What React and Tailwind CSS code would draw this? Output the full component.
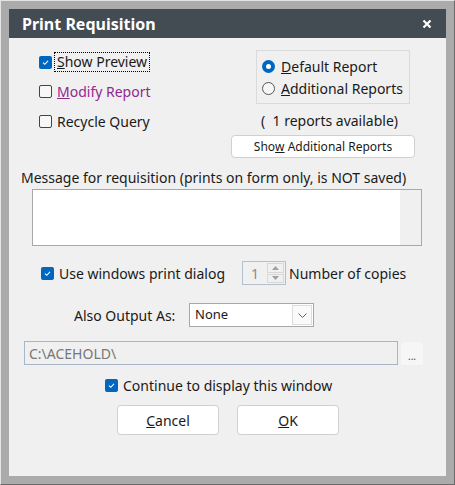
import React from 'react';

const font = { fontFamily: '"Noto Sans", "Segoe UI", sans-serif' };

const Check = ({ checked }) =>
  checked ? (
    <span className="flex w-[13px] h-[13px] shrink-0 items-center justify-center rounded-[2px] bg-[#0067c0]">
      <svg width="9" height="9" viewBox="0 0 9 9">
        <path d="M2 4.6 L3.8 6.3 L7 2.8" fill="none" stroke="white" strokeWidth="1.1" />
      </svg>
    </span>
  ) : (
    <span className="block w-[13px] h-[13px] shrink-0 rounded-[2px] border border-[#444] bg-[#f7f7f7]" />
  );

const Radio = ({ checked }) =>
  checked ? (
    <span className="flex w-[13px] h-[13px] shrink-0 items-center justify-center rounded-full bg-[#0067c0]">
      <span className="block w-[5px] h-[5px] rounded-full bg-white" />
    </span>
  ) : (
    <span className="block w-[13px] h-[13px] shrink-0 rounded-full border border-[#555] bg-[#f7f7f7]" />
  );

const Btn = ({ children, className = '' }) => (
  <div className={`flex items-center justify-center rounded-[4px] border border-[#d0d0d0] bg-white text-[#1a1a1a] ${className}`}>
    {children}
  </div>
);

export default function App() {
  return (
    <div
      className="w-[455px] h-[485px] bg-[#ababab] border-t border-l border-t-[#e4e4e4] border-l-[#e4e4e4] border-r border-b border-r-[#6a6a6a] border-b-[#6a6a6a] p-[8px] text-[#1a1a1a]"
      style={font}
    >
      <div className="flex h-full w-full flex-col">
        {/* Title bar */}
        <div className="flex h-[29px] shrink-0 items-center justify-between bg-[#434b53] pl-[13px] pr-[14px]">
          <span className="text-[16px] font-bold text-white leading-none">Print Requisition</span>
          <svg width="10" height="10" viewBox="0 0 10 10">
            <path d="M1.5 1.5 L8.5 8.5 M8.5 1.5 L1.5 8.5" stroke="white" strokeWidth="2.2" />
          </svg>
        </div>

        {/* Body */}
        <div className="flex flex-1 flex-col bg-[#f0f0f0] pt-[12px] text-[14px]">
          <div className="flex">
            {/* Left options */}
            <div className="ml-[30px] mt-[2px] flex flex-col">
              <div className="flex h-[20px] items-center">
                <Check checked />
                <span className="ml-[2px] border border-dotted border-black px-[2px] leading-[18px]">
                  <u>S</u>how Preview
                </span>
              </div>
              <div className="mt-[9px] flex h-[20px] items-center">
                <Check />
                <span className="ml-[5px] text-[#94278f]">
                  <u>M</u>odify Report
                </span>
              </div>
              <div className="mt-[10px] flex h-[20px] items-center">
                <Check />
                <span className="ml-[5px]">Recycle Query</span>
              </div>
            </div>

            {/* Right report group */}
            <div className="ml-auto mr-[31px] flex w-[184px] flex-col">
              <div className="ml-[25px] flex h-[54px] w-[154px] flex-col justify-center border border-[#dadada] pl-[5px]">
                <div className="flex h-[22px] items-center">
                  <Radio checked />
                  <span className="ml-[6px]">
                    <u>D</u>efault Report
                  </span>
                </div>
                <div className="flex h-[22px] items-center">
                  <Radio />
                  <span className="ml-[6px]">
                    <u>A</u>dditional Reports
                  </span>
                </div>
              </div>
              <div className="mt-[7px] h-[20px] pl-[30px] leading-[20px]">(&nbsp; 1 reports available)</div>
              <Btn className="mt-[4px] h-[23px] w-[184px] text-[12px]">
                Sho<u>w</u>&nbsp;Additional Reports
              </Btn>
            </div>
          </div>

          {/* Message */}
          <div className="ml-[12px] mt-[10px] h-[20px] leading-[20px]">
            Message for requisition (prints on form only, is NOT saved)
          </div>
          <div className="ml-[23px] mt-[1px] flex h-[57px] w-[390px] border border-[#a8a8a8] bg-white">
            <div className="flex-1" />
            <div className="w-[21px] bg-[#f0f0f0]" />
          </div>

          {/* Print dialog + copies */}
          <div className="mt-[15px] flex h-[24px] items-center">
            <div className="ml-[32px]">
              <Check checked />
            </div>
            <span className="ml-[5px]">Use windows print dialog</span>
            <div className="ml-auto mr-[160px] flex h-[24px] w-[44px] items-center border border-[#b5c0cf] bg-[#f0f0f0]">
              <span className="flex-1 text-center text-[#8a8a8a]">1</span>
              <div className="mr-[1px] flex h-[20px] w-[17px] flex-col gap-[1px]">
                <div className="flex flex-1 items-center justify-center border border-[#d8d8d8]">
                  <svg width="7" height="4" viewBox="0 0 7 4"><path d="M0 4 L3.5 0 L7 4 Z" fill="#a0a0a0" /></svg>
                </div>
                <div className="flex flex-1 items-center justify-center border border-[#d8d8d8]">
                  <svg width="7" height="4" viewBox="0 0 7 4"><path d="M0 0 L3.5 4 L7 0 Z" fill="#a0a0a0" /></svg>
                </div>
              </div>
            </div>
          </div>
          <div className="-mt-[24px] ml-[280px] flex h-[24px] items-center">Number of copies</div>

          {/* Also output */}
          <div className="mt-[18px] flex h-[24px] items-center">
            <span className="ml-[65px] w-[115px]">Also Output As:</span>
            <div className="flex h-[24px] w-[125px] items-center border border-[#a8a8a8] bg-white pl-[5px] text-[13px]">
              <span className="flex-1">None</span>
              <div className="mr-[1px] flex h-[20px] w-[20px] items-center justify-center border border-[#dcdcdc] bg-[#fafafa]">
                <svg width="9" height="5" viewBox="0 0 9 5"><path d="M0.5 0.5 L4.5 4.5 L8.5 0.5" fill="none" stroke="#606060" strokeWidth="1" /></svg>
              </div>
            </div>
          </div>

          {/* Path */}
          <div className="mt-[14px] flex h-[24px] items-center">
            <div className="ml-[15px] flex h-[24px] w-[374px] items-center border border-[#a9b6c8] bg-[#f0f0f0] pl-[4px] text-[#777]">
              C:\ACEHOLD\
            </div>
            <div className="ml-[3px] flex h-[23px] w-[22px] items-end justify-center rounded-[3px] bg-[#f6f6f6] pb-[4px] text-[10px] leading-none text-[#444]">
              ...
            </div>
          </div>

          {/* Continue */}
          <div className="mt-[10px] flex h-[20px] items-center">
            <div className="ml-[96px]">
              <Check checked />
            </div>
            <span className="ml-[5px]">Continue to display this window</span>
          </div>

          {/* Buttons */}
          <div className="mt-[10px] flex">
            <Btn className="ml-[108px] h-[30px] w-[102px]">
              <u>C</u>ancel
            </Btn>
            <Btn className="ml-[18px] h-[30px] w-[102px]">
              <u>O</u>K
            </Btn>
          </div>
        </div>
      </div>
    </div>
  );
}
